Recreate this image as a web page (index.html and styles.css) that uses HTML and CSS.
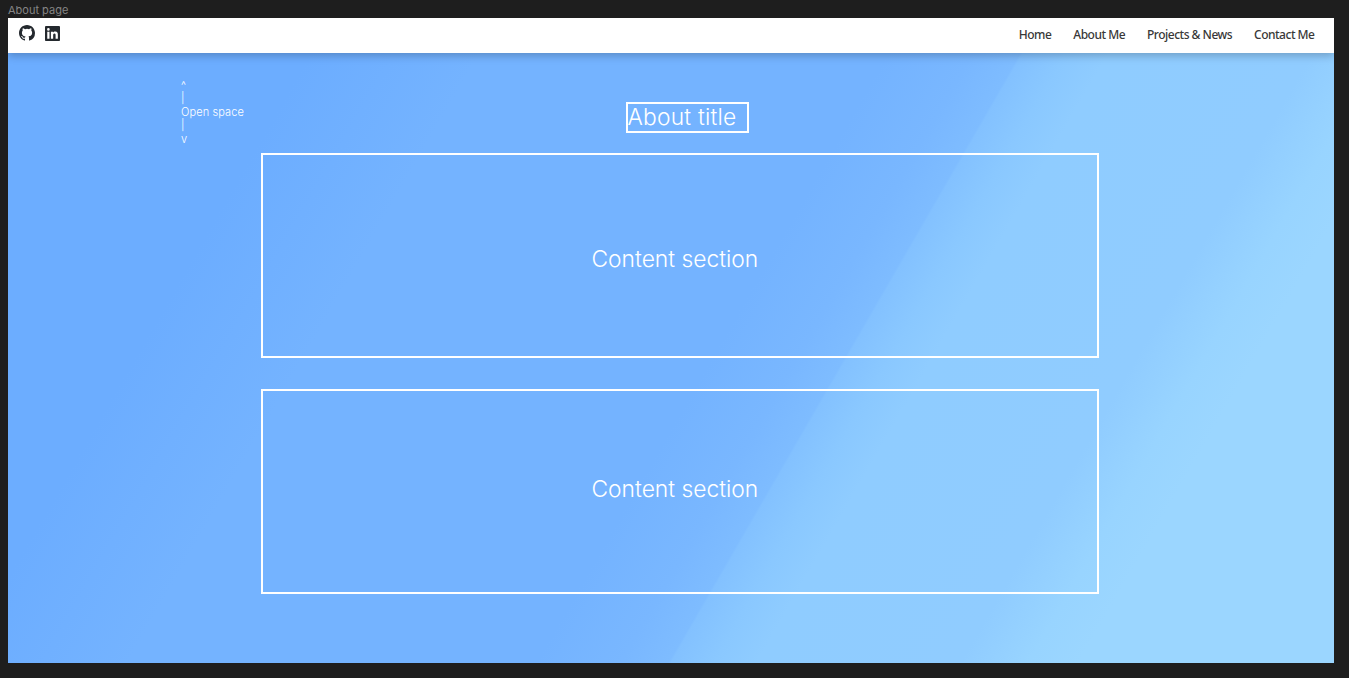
FILE: index.html
```html
<!DOCTYPE html>
<html lang="en">
<head>
<meta charset="utf-8">
<title>About page</title>
<link rel="stylesheet" href="styles.css">
</head>
<body>
<div class="frame-label">About page</div>
<div class="page">
  <header class="navbar">
    <div class="social">
      <svg class="icon github" viewBox="0 0 16 16"><path fill="currentColor" d="M8 0C3.58 0 0 3.58 0 8c0 3.54 2.29 6.53 5.47 7.59.4.07.55-.17.55-.38 0-.19-.01-.82-.01-1.49-2.01.37-2.53-.49-2.69-.94-.09-.23-.48-.94-.82-1.13-.28-.15-.68-.52-.01-.53.63-.01 1.08.58 1.23.82.72 1.21 1.87.87 2.33.66.07-.52.28-.87.51-1.07-1.78-.2-3.64-.89-3.64-3.95 0-.87.31-1.59.82-2.15-.08-.2-.36-1.02.08-2.12 0 0 .67-.21 2.2.82a7.6 7.6 0 0 1 4 0c1.53-1.04 2.2-.82 2.2-.82.44 1.1.16 1.92.08 2.12.51.56.82 1.27.82 2.15 0 3.07-1.87 3.75-3.65 3.95.29.25.54.73.54 1.48 0 1.07-.01 1.93-.01 2.2 0 .21.15.46.55.38A8.01 8.01 0 0 0 16 8c0-4.42-3.58-8-8-8z"/></svg>
      <svg class="icon linkedin" viewBox="0 0 16 16"><path fill="currentColor" fill-rule="evenodd" d="M1.2 0h13.6C15.5 0 16 .5 16 1.2v13.6c0 .7-.5 1.2-1.2 1.2H1.2C.5 16 0 15.5 0 14.8V1.2C0 .5.5 0 1.2 0zM2.4 6v7.6h2.4V6zM3.6 2.2a1.4 1.4 0 1 0 0 2.8 1.4 1.4 0 0 0 0-2.8zM6.3 6v7.6h2.4V9.9c0-1 .2-2 1.4-2s1.2 1.1 1.2 2v3.7h2.4V9.4c0-2-.4-3.6-2.8-3.6-1.2 0-1.9.6-2.3 1.2V6z"/></svg>
    </div>
    <nav class="links">
      <a>Home</a><a>About Me</a><a>Projects &amp; News</a><a>Contact Me</a>
    </nav>
  </header>
  <main class="content">
    <div class="note"><span>^</span><span>|</span><span>Open space</span><span>|</span><span>v</span></div>
    <div class="column">
      <h1 class="title">About title</h1>
      <section class="section">Content section</section>
      <section class="section second">Content section</section>
    </div>
  </main>
</div>
</body>
</html>
```
FILE: styles.css
```css
* { box-sizing: border-box; }
body {
  margin: 0;
  padding: 0 15px 15px 8px;
  height: 678px;
  overflow: hidden;
  background: #1e1e1e;
  font-family: Inter, sans-serif;
}
.frame-label {
  height: 18px;
  padding-top: 3px;
  font-size: 11px;
  line-height: 14px;
  color: #858585;
}
.page {
  height: 645px;
  overflow: hidden;
  background: linear-gradient(120deg, #6cadff 0%, #6cadff 19%, #74b3ff 29%, #74b3ff 53%, #79b7ff 58%, #7ebcff 60.8%, #83c1ff 60.95%, #8ac8ff 63.5%, #8fccff 66%, #90ccff 78%, #98d4ff 82%, #9bd6ff 85%, #9bd6ff 100%);
}
.navbar {
  position: relative;
  height: 34.5px;
  display: flex;
  justify-content: space-between;
  background: #fff;
  box-shadow: 0 3px 8px rgba(0, 0, 0, 0.22);
}
.social {
  display: flex;
  gap: 10px;
  padding: 7px 0 0 11px;
  color: #24292e;
}
.icon { display: block; }
.github { width: 16px; height: 16px; }
.linkedin { width: 15px; height: 15px; margin-top: 1px; }
.links {
  display: flex;
  gap: 22px;
  padding: 9px 19.5px 0 0;
  font: 500 12px/16px "Noto Sans", sans-serif;
  letter-spacing: -0.5px;
  color: #383838;
}
.content {
  display: flex;
  color: #fff;
}
.note {
  display: flex;
  flex-direction: column;
  width: 253px;
  padding: 26px 0 0 173px;
  font-size: 11px;
  line-height: 13.5px;
  font-weight: 300;
  letter-spacing: 0.1px;
  white-space: nowrap;
}
.column {
  width: 838px;
  padding-top: 49px;
}
.title {
  width: 123px;
  height: 31px;
  margin: 0 0 20.5px 364.5px;
  border: 2px solid #fff;
  font-size: 22.8px;
  font-weight: 300;
  line-height: 26px;
  letter-spacing: 0.2px;
  white-space: nowrap;
}
.section {
  height: 205px;
  margin-bottom: 31px;
  padding: 90px 0 0 328.5px;
  border: 2px solid #fff;
  font-size: 22.8px;
  font-weight: 300;
  line-height: 27px;
}
.section.second { padding-top: 84px; }
```
